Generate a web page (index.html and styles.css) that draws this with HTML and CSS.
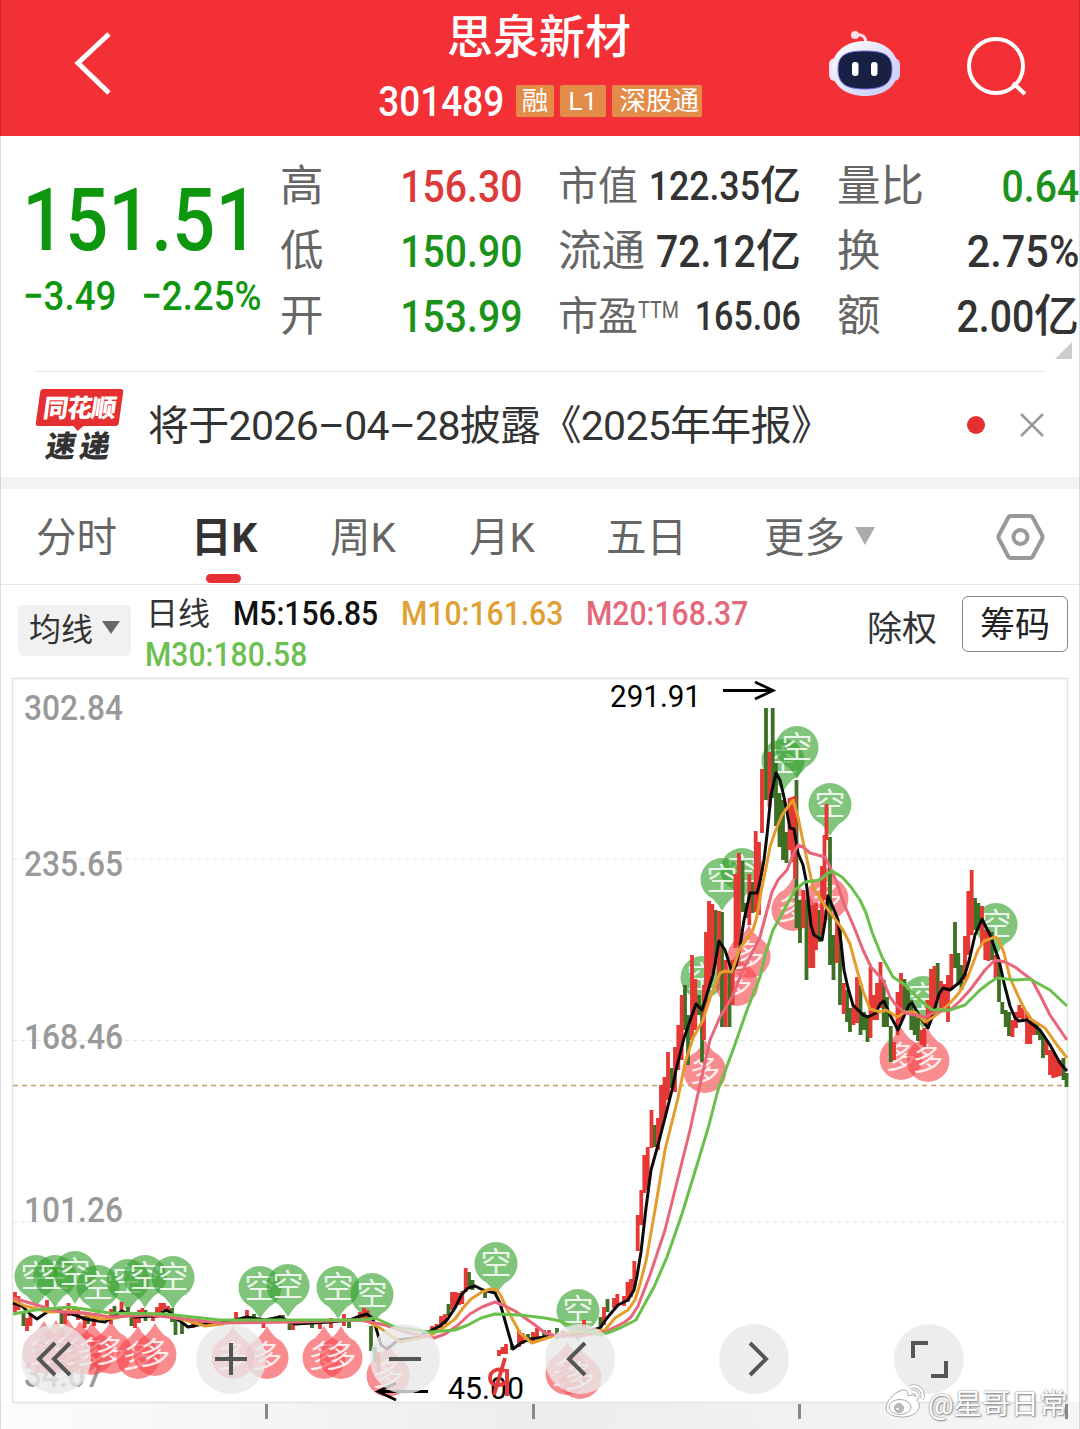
FILE: index.html
```html
<!DOCTYPE html>
<html lang="zh-CN">
<head>
    <meta charset="UTF-8">
    <meta name="viewport" content="width=device-width, initial-scale=1.0">
    <title>思泉新材 301489</title>
    <link rel="stylesheet" href="styles.css">
</head>
<body>
<div class="page">
    <header class="header">
        <svg class="back" width="50" height="70" viewBox="0 0 50 70"><path d="M43 5L12 34L43 64" fill="none" stroke="#fff" stroke-width="5"/></svg>
        <div class="title">
            <h1>思泉新材</h1>
            <div class="code"><span class="num">301489</span><em class="tag">融</em><em class="tag">L1</em><em class="tag">深股通</em></div>
        </div>
        <div class="header-icons">
            <svg width="76" height="72" viewBox="826 28 76 72">
                <defs><linearGradient id="bot" x1="0" y1="0" x2="1" y2="1"><stop offset="0" stop-color="#fff"/><stop offset="1" stop-color="#c5c8f5"/></linearGradient></defs>
                <path d="M855 35Q866 33 866 44" fill="none" stroke="#fbdfe6" stroke-width="3"/>
                <circle cx="855" cy="35" r="4" fill="#fbdfe6"/>
                <rect x="829" y="58" width="12" height="23" rx="6" fill="#f3e3f3"/>
                <rect x="888" y="58" width="12" height="23" rx="6" fill="#d2cff5"/>
                <path d="M832 69C832 51 847 41 865 41S898 51 898 69S883 96 865 96S832 87 832 69Z" fill="url(#bot)"/>
                <path d="M838 69C838 55 846 51 865 51S892 55 892 69S884 89 865 89S838 84 838 69Z" fill="#182044" stroke="#7b6be0" stroke-width="1"/>
                <rect x="852" y="62" width="6.500" height="14" rx="3" fill="#fff"/>
                <rect x="871" y="62" width="6.500" height="14" rx="3" fill="#fff"/>
            </svg>
            <svg width="64" height="64" viewBox="964 33 64 64"><g fill="none" stroke="#fff" stroke-width="4"><circle cx="996" cy="66" r="27"/><path d="M1013 83L1025 94"/></g></svg>
        </div>
    </header>

    <section class="quote">
        <div class="price">
            <strong><span class="num">151.51</span></strong>
            <div class="change"><span class="num">−3.49</span><span class="num">−2.25%</span></div>
        </div>
        <dl class="stats">
            <div><dt>高</dt><dd class="up"><span class="num">156.30</span></dd></div>
            <div class="tight"><dt>市值</dt><dd><span class="num">122.35</span>亿</dd></div>
            <div><dt>量比</dt><dd class="down"><span class="num">0.64</span></dd></div>
            <div><dt>低</dt><dd class="down"><span class="num">150.90</span></dd></div>
            <div><dt>流通</dt><dd><span class="num">72.12</span>亿</dd></div>
            <div><dt>换</dt><dd><span class="num wide">2.75%</span></dd></div>
            <div><dt>开</dt><dd class="down"><span class="num">153.99</span></dd></div>
            <div class="tight"><dt>市盈<sup>TTM</sup></dt><dd><span class="num narrow">165.06</span></dd></div>
            <div><dt>额</dt><dd><span class="num">2.00</span>亿</dd></div>
        </dl>
        <i class="corner"></i>
    </section>

    <section class="news">
        <div class="news-logo">
            <span class="brand">同花顺</span>
            <span class="sub">速递</span>
        </div>
        <p>将于2026<s>–</s>04<s>–</s>28披露《2025年年报》</p>
        <i class="dot"></i>
        <svg width="26" height="26" viewBox="0 0 26 26"><path d="M2 2L24 24M24 2L2 24" stroke="#999" stroke-width="2.500"/></svg>
    </section>

    <nav class="tabs">
        <a>分时</a>
        <a class="active">日K</a>
        <a>周K</a>
        <a>月K</a>
        <a>五日</a>
        <a>更多<i class="caret"></i></a>
        <svg width="50" height="48" viewBox="996 513 50 48"><g fill="none" stroke="#999" stroke-width="4" stroke-linejoin="round"><path d="M1010 516H1031Q1032 516 1033 518L1042 535Q1043 537 1042 539L1033 556Q1032 558 1031 558H1010Q1009 558 1008 556L999 539Q998 537 999 535L1008 518Q1009 516 1010 516Z"/><circle cx="1020.500" cy="537" r="7"/></g></svg>
    </nav>

    <section class="indicators">
        <button class="ma-btn">均线<i class="caret"></i></button>
        <div class="ma">
            <span class="name">日线</span>
            <span class="num m5">M5:156.85</span>
            <span class="num m10">M10:161.63</span>
            <span class="num m20">M20:168.37</span>
            <span class="num m30">M30:180.58</span>
        </div>
        <span class="ex">除权</span>
        <button class="chips">筹码</button>
    </section>

    <section class="chart">
        <svg class="plot" width="1080" height="759" viewBox="0 670 1080 759">
            <defs>
                <linearGradient id="strip"><stop offset="0" stop-color="#fcfcfc"/><stop offset=".5" stop-color="#ededed"/><stop offset="1" stop-color="#f6f6f6"/></linearGradient>
                <g id="k">
                    <path d="M0 31Q-3 25 -9 19A21.500 21.500 0 1 1 9 19Q3 25 0 31Z" fill="#33a02c" fill-opacity=".62"/>
                    <text y="10" text-anchor="middle" class="pin">空</text>
                </g>
                <g id="d">
                    <path d="M0 -31Q-3 -25 -9 -19A21.500 21.500 0 1 0 9 -19Q3 -25 0 -31Z" fill="#f5454a" fill-opacity=".62"/>
                    <text y="10" text-anchor="middle" class="pin">多</text>
                </g>
            </defs>
            <rect x="0" y="1402" width="1080" height="27" fill="url(#strip)"/>
            <rect x="12.500" y="678.500" width="1055" height="724" fill="#fff" stroke="#e2e2e2" stroke-width="1.500"/>
            <path d="M13 859H1067M13 1040.500H1067M13 1222H1067" stroke="#e4e4e4" stroke-dasharray="4 4"/>

            <!-- y axis -->
            <g class="axis">
                <text x="24" y="720" textLength="99" lengthAdjust="spacingAndGlyphs">302.84</text>
                <text x="24" y="876" textLength="99" lengthAdjust="spacingAndGlyphs">235.65</text>
                <text x="24" y="1049" textLength="99" lengthAdjust="spacingAndGlyphs">168.46</text>
                <text x="24" y="1222" textLength="99" lengthAdjust="spacingAndGlyphs">101.26</text>
                <text x="24" y="1387" textLength="79" lengthAdjust="spacingAndGlyphs">34.07</text>
            </g>

            <!-- long / short signals -->
            <use href="#k" x="36" y="1277"/><use href="#k" x="55" y="1277"/><use href="#k" x="75" y="1273"/><use href="#k" x="98" y="1287"/><use href="#k" x="128" y="1281"/><use href="#k" x="145" y="1277"/><use href="#k" x="173" y="1278"/>
            <use href="#k" x="260" y="1288"/><use href="#k" x="288" y="1286"/><use href="#k" x="338" y="1288"/><use href="#k" x="372" y="1295"/>
            <use href="#k" x="496" y="1264"/><use href="#k" x="578" y="1311"/><use href="#k" x="702" y="978"/><use href="#k" x="742" y="870"/><use href="#k" x="722" y="880"/>
            <use href="#k" x="783" y="761"/><use href="#k" x="797" y="748"/><use href="#k" x="830" y="805"/><use href="#k" x="923" y="998"/><use href="#k" x="996" y="925"/>
            <use href="#d" x="44" y="1352"/><use href="#d" x="56" y="1351"/><use href="#d" x="68" y="1350"/><use href="#d" x="80" y="1352"/><use href="#d" x="92" y="1353"/><use href="#d" x="111" y="1352"/><use href="#d" x="138" y="1357"/><use href="#d" x="155" y="1354"/>
            <use href="#d" x="233" y="1357"/><use href="#d" x="267" y="1357"/><use href="#d" x="324" y="1357"/><use href="#d" x="341" y="1357"/><use href="#d" x="388" y="1375"/>
            <use href="#d" x="567" y="1373"/><use href="#d" x="580" y="1377"/><use href="#d" x="705" y="1071"/><use href="#d" x="737" y="984"/><use href="#d" x="749" y="956"/>
            <use href="#d" x="793" y="909"/><use href="#d" x="827" y="898"/><use href="#d" x="901" y="1058"/><use href="#d" x="928" y="1060"/>

            <path d="M13 1085.500H1067" stroke="#c3a067" stroke-width="1.500" stroke-dasharray="5 4"/>

            <!-- candles -->
            <g fill="none" stroke-width="3.800">
                <path stroke="#3d6f24" d="M766 708V800M772.700 708V798M776 763V826M779.500 793V847M783 800V860M786.500 832V863M796.500 780V928M830 837V965M742.500 861V912M746 903V918M752.500 882V913M715.500 910V965M722 912V1027M729.500 970V1027M699 995V1015M702 1005V1062M685 985V1030M688 1015V1065M671.500 1068V1088M800 900V943M806.500 900V980M819 910V942M833.500 935V980M840 930V1005M847 990V1022M850 1008V1032M860.500 985V1035M864 1012V1030M867.500 1015V1042M883.700 980V1027M887 997V1027M890.700 1026V1062M904.500 979V1010M908 990V1012M911.300 1000V1030M914.700 1010V1035M918 1018V1041M937.700 963V1000M955 922V968M958.300 953V985M961.500 965V990M975 898V930M978.300 903V930M992 932V960M999 960V1002M1002.300 1002V1014M1005.700 1010V1027M1009 1012V1036M1037 1022V1035M1040 1030V1040M1043 1035V1058M1063.500 1058V1080M1066.500 1073V1087M654.700 1125V1147M607.500 1299V1312M600.500 1317V1328M371 1326V1351M375 1347V1362M448.500 1304V1316M469 1272V1286M472.500 1280V1290M485 1289V1298M512 1344V1350"/>
                <path stroke="#e53734" d="M769.500 752V807M762 769V833M755.700 831V912M759 842V915M789.500 798V850M792.500 797V862M795 796V879M826.500 804V840M824.500 835V900M822 866V935M739 853V945M735.500 874V948M749.300 874V925M709 901V985M712.300 904V975M719 911V980M725.700 960V1027M732.700 960V1005M706 932V1010M704 985V1040M692 955V1040M695.300 979V1030M681.700 995V1060M678.300 1025V1070M675 1047V1092M803.300 890V928M810 910V968M813.300 905V968M816 903V950M837 920V963M843.700 983V1014M853.500 1005V1025M857 977V1023M870.500 967V1038M873.700 995V1020M877 983V1020M880.500 962V1008M894 1042V1060M897.500 992V1035M901 973V1022M921.500 1030V1045M924.500 1028V1047M927.700 1000V1028M931 969V1018M934.500 966V1012M941 981V1008M944.500 984V1010M948 975V1022M951.300 954V990M965 936V980M968.300 891V955M971.700 870V935M982 906V945M985.300 930V960M988.500 930V961M995.500 955V980M1012.500 1020V1037M1016 1012V1028M1019.300 1005V1018M1022.700 1008V1020M1027 1012V1044M1030.300 1020V1044M1033.700 1020V1035M1046.500 1040V1055M1050 1050V1075M1053.300 1053V1078M1056.700 1058V1077M1060 1060V1076M668 1052V1100M664.500 1077V1118M661 1085V1130M658 1118V1150M651.500 1110V1148M647.700 1147V1190M644.300 1155V1193M641.300 1190V1225M637.700 1215V1251M634.300 1261V1287M631 1279V1297M627.500 1282V1302M624 1296V1306M617.300 1294V1306M614 1298V1308M604 1307V1325M378.500 1352V1372M432 1326V1332M436.500 1324V1332M441 1316V1328M445 1314V1324M452 1292V1310M455.500 1292V1306M459 1293V1305M462.300 1291V1304M465.700 1268V1292M499 1350V1356M502.500 1347V1354M506 1344V1354M519 1330V1347M522.500 1333V1344M537 1328V1338M584 1320V1333"/>
                <path stroke="#3d6f24" d="M23.500 1312V1326M61.500 1312V1324M74 1306V1316M88 1314V1324M114.500 1306V1314M128 1307V1316M131.500 1317V1326M145.500 1310V1321M172 1308V1322M175.500 1318V1335M182 1323V1334M254 1314V1320M283 1315V1323M289.500 1322V1330M312 1320V1328M349 1318V1328M528 1334V1342M544 1330V1338M557 1328V1339"/>
                <path stroke="#e53734" d="M15 1292V1312M18.500 1296V1310M27 1318V1331M30.500 1315V1326M47 1300V1312M65 1312V1324M68.500 1303V1316M78 1308V1320M84.500 1316V1328M94 1318V1326M111 1309V1324M121.500 1302V1314M135 1316V1328M139 1310V1323M142.500 1308V1318M153 1313V1321M157 1307V1318M160.500 1303V1313M164 1303V1310M168 1306V1312M193 1320V1328M199 1317V1325M236 1312V1322M247 1310V1320M263.500 1319V1328M280 1315V1321M293 1324V1330M320 1320V1329M331 1318V1328M344 1314V1326M360 1312V1322M364 1308V1318M367.500 1310V1318M533 1332V1341M549 1330V1337M563 1331V1338"/>
            </g>

            <!-- moving averages -->
            <g fill="none" stroke-width="3" stroke-linejoin="round">
                <polyline stroke="#0b0b0b" points="13,1303 22,1306 30,1314 37,1319 50,1310 62,1311 75,1315 85,1319 105,1322 122,1311 135,1317 155,1316 167,1310 176,1318 188,1327 203,1324 220,1323 235,1320 247,1317 265,1320 280,1317 295,1324 330,1322 350,1320 360,1316 367,1314 372,1318 376,1328 381,1345 387,1349 391,1346 398,1340 415,1338 430,1331 440,1326 447,1320 455,1308 462,1294 468,1288 475,1286 483,1290 495,1293 500,1303 513,1349 521,1343 530,1339 560,1335 585,1332 600,1328 607,1318 618,1305 628,1300 634,1290 637,1276 641,1252 646,1208 651,1170 658,1145 667,1110 672,1090 676,1070 684,1038 691,1018 696,1004 702,1010 713,975 719,941 725,950 732,972 736,965 739,953 744,920 750,893 757,893 760,882 764,860 767,835 771,795 776,773 780,780 784,797 790,828 794,829 798,853 803,865 806,880 811,925 814,935 822,940 825,922 828,896 835,912 838,920 841,942 844,970 848,988 853,1005 863,1015 868,1017 876,1013 880,1004 884,1001 890,1015 898,1030 905,1014 909,1005 912,1003 920,1017 928,1028 932,1018 939,994 943,988 950,990 960,982 965,974 969,961 975,935 982,919 990,935 999,960 1004,983 1010,1006 1015,1018 1019,1021 1027,1020 1040,1030 1050,1045 1060,1063 1067,1071"/>
                <polyline stroke="#e39c2d" points="13,1300 25,1306 50,1312 75,1311 100,1319 115,1318 135,1314 160,1314 185,1320 205,1326 240,1322 365,1320 380,1328 400,1342 420,1338 433,1334 443,1328 455,1319 463,1308 471,1299 482,1292 490,1289 497,1290 501,1296 507,1309 520,1333 532,1343 550,1337 570,1333 605,1330 615,1318 628,1310 635,1300 640,1284 646,1261 655,1210 665,1150 678,1098 685,1063 693,1038 703,1020 711,995 720,973 725,971 732,972 740,948 746,940 753,930 757,916 762,887 766,868 770,847 775,832 782,815 793,800 798,817 804,846 813,887 823,903 833,916 843,930 850,944 857,970 863,991 870,1009 880,1012 886,1010 897,1017 905,1012 915,1012 925,1022 932,1018 940,1012 950,1003 959,993 967,979 978,950 984,941 995,937 999,940 1004,953 1010,978 1020,1000 1025,1010 1032,1020 1045,1028 1057,1045 1067,1058"/>
                <polyline stroke="#e9657a" points="13,1298 30,1303 60,1312 85,1313 110,1317 150,1315 220,1323 300,1322 360,1320 385,1325 405,1332 434,1338 445,1334 457,1326 470,1314 482,1307 495,1302 505,1306 515,1311 535,1325 545,1333 557,1336 580,1336 605,1332 625,1322 631,1317 638,1306 650,1275 665,1230 680,1170 690,1130 697,1098 710,1040 720,1017 732,997 743,970 752,953 760,937 765,918 772,892 778,880 787,870 793,855 798,845 803,847 810,853 825,857 831,869 837,883 844,904 854,927 863,950 871,967 883,980 890,997 895,1004 905,1013 925,1017 935,1012 950,1010 960,1001 970,990 985,970 995,960 1005,962 1015,967 1032,980 1041,997 1050,1015 1067,1040"/>
                <polyline stroke="#6bbf4b" points="13,1314 35,1310 70,1307 110,1313 165,1314 220,1320 360,1320 375,1318 395,1327 430,1332 455,1330 468,1325 481,1318 495,1314 520,1315 545,1318 560,1321 575,1328 600,1335 610,1332 622,1327 636,1320 643,1307 654,1287 667,1257 682,1214 700,1155 709,1125 718,1090 733,1050 747,1010 760,977 766,952 773,930 783,912 795,890 805,882 820,880 827,874 832,871 842,877 851,887 860,900 866,913 872,932 882,957 893,977 905,985 913,993 920,1000 932,1010 950,1010 965,1005 972,998 980,990 989,983 997,978 1015,980 1030,979 1050,990 1067,1006"/>
            </g>

            <!-- high / low labels -->
            <g class="mark">
                <text x="610" y="707" textLength="91" lengthAdjust="spacingAndGlyphs">291.91</text>
                <text x="448" y="1399" textLength="76" lengthAdjust="spacingAndGlyphs">45.00</text>
            </g>
            <path d="M723 690.500H772M755 682L773 690.500L755 699M428 1391.500H379M396 1383L378 1391.500L396 1400" fill="none" stroke="#000" stroke-width="2.800"/>
            <path d="M505 1358L494 1395M507 1369V1396M505 1371C498 1367 490 1371 490 1378C490 1386 500 1387 506 1382" fill="none" stroke="#e5383b" stroke-width="3.800"/>
            <path d="M266.500 1404V1419M533.500 1404V1419M799.500 1404V1419M1066.500 1404V1419" stroke="#888" stroke-width="3"/>
        </svg>

        <div class="controls">
            <button><svg viewBox="0 0 70 70"><path d="M34 19L18 35L34 51M49 19L33 35L49 51"/></svg></button>
            <button><svg viewBox="0 0 70 70"><path d="M19 35H51M35 19V51"/></svg></button>
            <button><svg viewBox="0 0 70 70"><path d="M19 35H51"/></svg></button>
            <button><svg viewBox="0 0 70 70"><path d="M40 19L24 35L40 51"/></svg></button>
            <button><svg viewBox="0 0 70 70"><path d="M31 19L47 35L31 51"/></svg></button>
            <button><svg viewBox="0 0 70 70"><path d="M19 34V19H34M37 52H52V37"/></svg></button>
        </div>

        <div class="watermark">
            <svg width="44" height="36" viewBox="884 1384 44 36">
                <g fill="#fff" stroke="#aaa" stroke-width="1">
                    <path d="M886 1408C886 1400 898 1389 905 1390C909 1391 908 1395 908 1396C914 1394 919 1396 917 1401C922 1403 920 1417 902 1417C892 1417 886 1413 886 1408Z"/>
                    <ellipse cx="900" cy="1407" rx="11" ry="7.500"/>
                    <circle cx="899" cy="1408" r="4.500" fill="#bbb"/>
                    <circle cx="897.500" cy="1409" r="1.800"/>
                </g>
                <path d="M910 1387C918 1384 925 1391 922 1399M911 1392C915 1391 919 1394 917 1398" fill="none" stroke="#aaa" stroke-width="4"/>
                <path d="M910 1387C918 1384 925 1391 922 1399M911 1392C915 1391 919 1394 917 1398" fill="none" stroke="#fff" stroke-width="2.500"/>
            </svg>
            <span>@星哥日常</span>
        </div>
    </section>
</div>
</body>
</html>
```

FILE: styles.css
```css
* { box-sizing: border-box; margin: 0; padding: 0; }
body { width: 1080px; background: #fff; color: #333; font-family: Roboto, "Noto Sans CJK SC", sans-serif; }
button { border: 0; background: none; font: inherit; color: inherit; }
.page { position: relative; height: 1429px; overflow: hidden; }
.page::after { content: ""; position: absolute; inset: 0; border: solid rgba(0, 0, 0, .13); border-width: 0 1px; pointer-events: none; }
.num { display: inline-block; transform: scaleX(.87); transform-origin: right center; font-weight: 500; font-style: normal; }

/* header */
.header { display: grid; grid-template-columns: 378px 324px 378px; height: 136px; background: #f23036; color: #fff; }
.back { margin: 29px 0 0 66px; }
.title { display: flex; flex-direction: column; align-items: center; }
.title h1 { height: 74px; line-height: 74px; font-size: 46px; font-weight: 500; white-space: nowrap; margin-left: -2px; }
.code { display: flex; align-items: center; gap: 6px; height: 54px; width: 324px; justify-content: flex-end; }
.code .num { font-size: 42px; margin-right: 6px; transform: scaleX(.88); }
.tag { height: 32px; padding: 0 6px; line-height: 32px; font-size: 26.5px; font-style: normal; background: #e38b48; border-radius: 2px; white-space: nowrap; }
.tag:nth-child(3) { padding: 0 8px; }
.tag:nth-child(4) { padding: 0 3px 0 8px; }
.header-icons { display: flex; padding: 28px 0 0 124px; gap: 62px; }
.header-icons svg:last-child { margin-top: 5px; }

/* quote */
.quote { position: relative; display: flex; height: 235px; }
.price { width: 280px; padding-top: 31px; color: #0e970e; }
.price strong { display: flex; justify-content: flex-end; width: 258px; height: 104px; line-height: 106px; font-size: 87px; white-space: nowrap; }
.change { display: flex; justify-content: flex-end; width: 262px; height: 50px; line-height: 50px; font-size: 41px; }
.change .num { white-space: nowrap; transform: scaleX(.895); }
.change .num:first-child { margin-right: 11px; }
.stats { display: grid; grid-template-columns: 242px 243px 242px; grid-template-rows: repeat(3, 65px); column-gap: 36px; padding-top: 18px; }
.stats > div { display: flex; justify-content: space-between; align-items: center; white-space: nowrap; line-height: 65px; }
.stats dt { margin-top: -1px; font-size: 43.5px; color: #666; }
.stats dd { margin-left: -30px; font-size: 45px; font-weight: 500; }
.stats .tight dt { font-size: 40px; }
.stats .tight dd { font-size: 41px; }
.stats sup { display: inline-block; width: 40px; font-size: 24px; vertical-align: 12px; line-height: 0; transform: scaleX(.82); transform-origin: left center; }
.stats .wide { transform: scaleX(.92); }
.stats .narrow { transform: scaleX(.83); }
.stats .up { color: #dc3a3a; }
.stats .down { color: #1b931b; }
.corner { position: absolute; right: 8px; bottom: 12px; border-left: 17px solid transparent; border-bottom: 17px solid #ccc; }

/* news */
.news { display: flex; align-items: center; height: 106px; margin: 0 35px; border-top: 1px solid #e8e8e8; }
.news-logo { width: 88px; height: 76px; margin-top: 5px; font-weight: 900; line-height: 1; }
.brand { position: relative; display: block; width: 83px; height: 37px; margin-left: 3px; line-height: 40px; font-size: 25px; text-align: center; letter-spacing: -1px; color: #fff; background: #e52f31; border-radius: 3px; transform: skewX(-8deg); }
.brand::after { content: ""; position: absolute; left: 37px; top: 36px; border: 6px solid transparent; border-top-color: #e52f31; }
.sub { display: block; margin: 6px 0 0 11px; font-size: 30px; letter-spacing: 4px; color: #333; transform: skewX(-10deg); white-space: nowrap; }
.news p { flex: 1; margin: -5px 0 0 25px; font-size: 41px; letter-spacing: -.7px; white-space: nowrap; }
.news s { text-decoration: none; }
.dot { width: 18px; height: 18px; margin-right: 34px; border-radius: 50%; background: #e52f31; }

/* tabs */
.tabs { display: grid; grid-template-columns: 155px 139px 139px 137px 158px 231px 50px; align-items: center; height: 108px; padding-left: 37px; border-top: 12px solid #f4f4f4; border-bottom: 1px solid #e6e6e6; font-size: 40.5px; color: #666; }
.tabs a { position: relative; top: -2px; margin-left: -1px; white-space: nowrap; }
.tabs .active { font-weight: 700; color: #333; }
.tabs .active::after { content: ""; position: absolute; left: 15px; bottom: -19px; width: 35px; height: 9px; border-radius: 5px; background: #e52f31; }
.caret { display: inline-block; border: solid transparent; border-width: 18px 10.5px 0; border-top-color: #aaa; margin-left: 10px; vertical-align: 7px; }

/* indicators */
.indicators { display: flex; height: 85px; }
.ma-btn { width: 113px; height: 51px; margin: 20px 0 0 18px; font-size: 32px; line-height: 51px; background: #f1f1f1; border-radius: 5px; white-space: nowrap; }
.ma-btn .caret { border-width: 13px 9px 0; border-top-color: #666; margin-left: 9px; }
.ma { display: grid; grid-template-columns: 87px 168px 185px 185px; grid-template-rows: 41px 41px; align-items: center; width: 701px; margin: 7px 0 0 15px; font-size: 34px; white-space: nowrap; }
.ma .num { transform: scaleX(.885); transform-origin: left center; }
.ma .name { font-size: 32px; margin-top: -4px; }
.m5 { color: #111; }
.m10 { color: #dfa035; }
.m20 { color: #e4677a; }
.m30 { color: #6cc04f; margin-left: -1px; }
.ex { margin-left: 20px; width: 95px; font-size: 35px; line-height: 89px; }
.chips { width: 106px; height: 56px; margin-top: 11px; padding-top: 3px; border: 1.5px solid #888; border-radius: 6px; font-size: 35px; color: #222; line-height: 52px; }

/* chart */
.chart { position: relative; }
.plot { display: block; }
.pin { font-size: 31px; fill: #fff; fill-opacity: .85; }
.axis { font-size: 35px; font-weight: 500; fill: #999; }
.mark { font-size: 32px; fill: #000; }
.controls { position: absolute; left: 21px; top: 654px; display: flex; gap: 104.5px; }
.controls button { width: 70px; height: 70px; border-radius: 50%; background: rgba(233, 233, 233, .8); }
.controls svg { display: block; fill: none; stroke: #555; stroke-width: 4; }
.watermark { position: absolute; left: 884px; top: 711px; display: flex; align-items: center; font-size: 28.5px; color: #fff; text-shadow: 0 0 2px #777, 1px 1px 2px #888; white-space: nowrap; }
```
